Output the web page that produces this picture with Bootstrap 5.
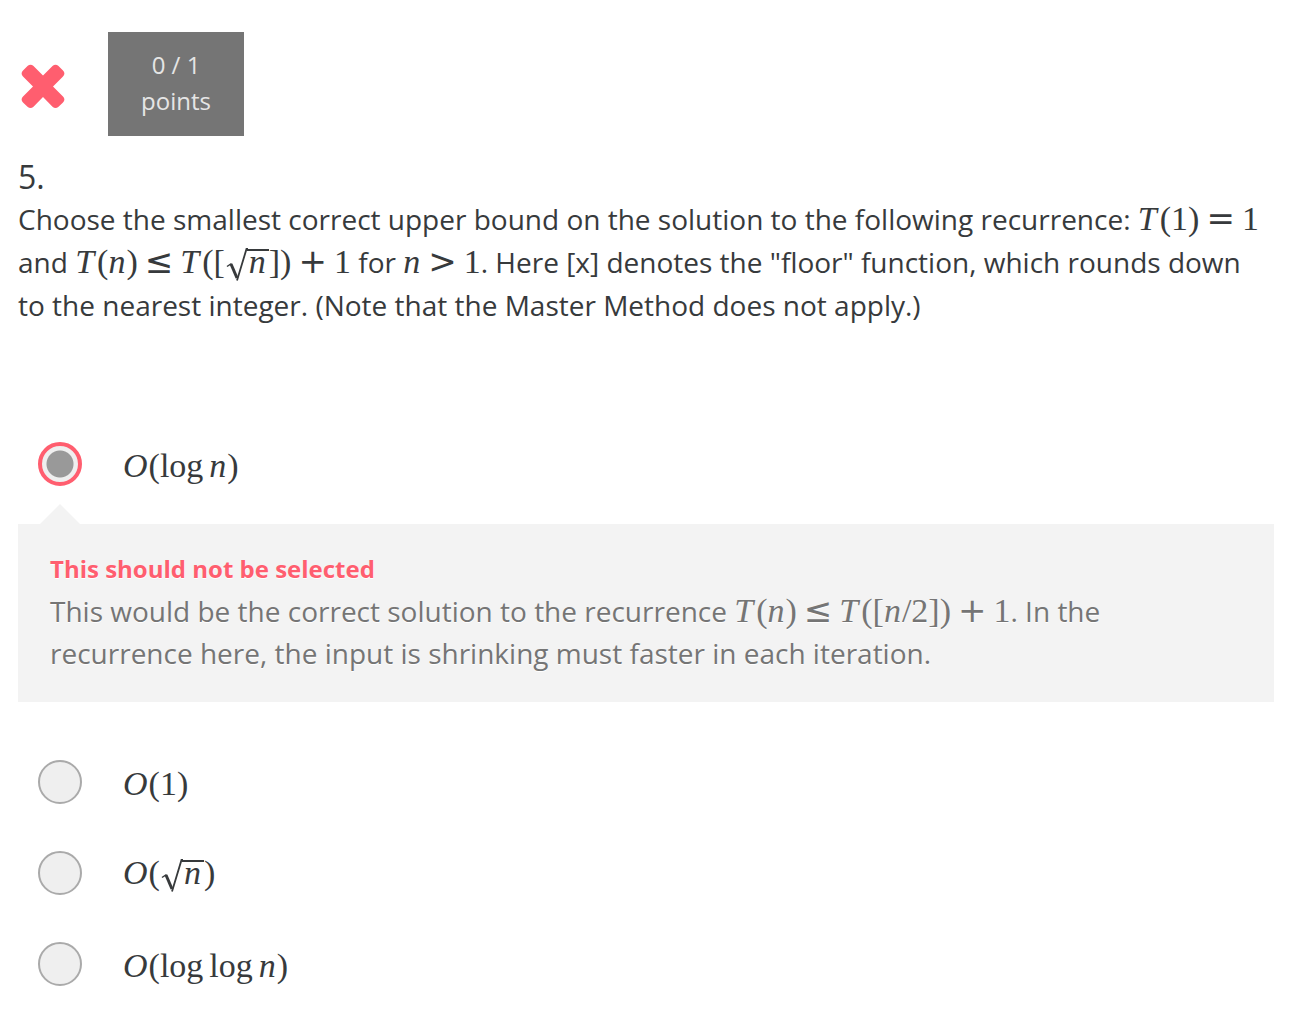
<!DOCTYPE html>
<html lang="en">
<head>
<meta charset="utf-8">
<meta name="viewport" content="width=device-width, initial-scale=1">
<title>Question 5</title>
<link href="https://cdn.jsdelivr.net/npm/bootstrap@5.3.0/dist/css/bootstrap.min.css" rel="stylesheet">
<style>
body { font-family: "Open Sans", "Noto Sans", sans-serif; color: #373a3c; background: #fff; }
.quiz { padding: 32px 32px 26px 18px; }
.wrong-icon { width: 50px; height: 50px; fill: #ff5e6f; }
.score { width: 136px; padding: 15px 0 17px; margin-left: 40px; background: #757575; color: #e5e5e5; font-size: 24px; line-height: 36px; }
.q-number { margin: 19px 0 0; font-size: 32px; line-height: 43px; font-weight: 400; }
.q-text { margin: 0 0 115px; font-size: 28px; line-height: 43px; }
.math { font-family: "Liberation Serif", serif; font-size: 34px; line-height: 1; white-space: nowrap; }
.math i { margin-right: 1px; }
.math .fn { margin-right: 3px; }
.op { font-family: "DejaVu Sans", sans-serif; font-size: 34px; line-height: 1; margin: 0 7px; }
.root-sign { width: 22px; height: 34px; vertical-align: -9px; margin-left: 1px; }
.radicand { display: inline-block; line-height: 22px; border-top: 2px solid; padding: 0 2px; margin-left: -1px; }
.thin { margin-left: 6px; }
.option { min-height: 44px; padding-left: 20px; gap: 41px; }
.option label { padding-top: 3px; }
.option + .option { margin-top: 47px; }
.option .form-check-input { width: 44px; height: 44px; margin: 0; background-color: #efefef; border: 2px solid #aaa; flex: none; }
.option .form-check-input:checked { border: 4px solid #ff5e6f; background: radial-gradient(circle, #999 0 13px, #efefef 14px); }
.arrow-up { width: 40px; height: 20px; margin: 18px 0 0 22px; background: #f3f3f3; clip-path: polygon(50% 0, 100% 100%, 0 100%); }
.feedback { padding: 24px 32px 28px; margin-bottom: 58px; background: #f3f3f3; color: #757575; font-size: 28px; line-height: 42px; text-shadow: 0 1px 0 #fff; }
.feedback-title { margin: 0; color: #ff5e6f; font-size: 24px; line-height: 42px; font-weight: 700; }
</style>
</head>
<body>
<main class="quiz">
  <header class="d-flex align-items-center">
    <svg class="wrong-icon" viewBox="0 -1 50 50" role="img" aria-label="Incorrect"><path d="M9.500 6.100Q12.500 3.600 15.500 6.100L25 15.600L34.500 6.100Q37.500 3.600 40.500 6.100L45 10.600Q47.800 13.600 45 16.600L35 26.500L45 36.500Q47.800 39.500 45 42.500L40.500 46.700Q37.500 49.200 34.500 46.700L25 37.100L15.500 46.700Q12.500 49.200 9.500 46.700L5 42.500Q2.200 39.500 5 36.500L15 26.500L5 16.600Q2.200 13.600 5 10.600Z"/></svg>
    <div class="score text-center">0 / 1<br>points</div>
  </header>
  <h1 class="q-number">5.</h1>
  <p class="q-text">Choose the smallest correct upper bound on the solution to the following recurrence: <span class="math"><i class="fn">T</i>(1)<span class="op">=</span>1</span> and <span class="math"><i class="fn">T</i>(<i>n</i>)<span class="op">≤</span><i class="fn">T</i>([<svg class="root-sign" viewBox="0 0 22 34" fill="none" stroke="currentColor" aria-hidden="true"><path d="M1 18.500L5.500 15.500" stroke-width="1.500"/><path d="M5 16L11 30" stroke-width="3"/><path d="M11 32.500L20.500 1H22" stroke-width="1.800"/></svg><span class="radicand"><i>n</i></span>])<span class="op">+</span>1</span> for <span class="math"><i>n</i><span class="op">&gt;</span>1</span>. Here [x] denotes the "floor" function, which rounds down to the nearest integer. (Note that the Master Method does not apply.)</p>
  <form>
    <div class="option d-flex align-items-center">
      <input class="form-check-input" type="radio" name="bound" id="a1" checked>
      <label class="math" for="a1"><i>O</i>(log<i class="thin">n</i>)</label>
    </div>
    <div class="arrow-up"></div>
    <section class="feedback">
      <h2 class="feedback-title">This should not be selected</h2>
      <p class="mb-0">This would be the correct solution to the recurrence <span class="math"><i class="fn">T</i>(<i>n</i>)<span class="op">≤</span><i class="fn">T</i>([<i>n</i>/2])<span class="op">+</span>1</span>. In the recurrence here, the input is shrinking must faster in each iteration.</p>
    </section>
    <div class="option d-flex align-items-center">
      <input class="form-check-input" type="radio" name="bound" id="a2">
      <label class="math" for="a2"><i>O</i>(1)</label>
    </div>
    <div class="option d-flex align-items-center">
      <input class="form-check-input" type="radio" name="bound" id="a3">
      <label class="math" for="a3"><i>O</i>(<svg class="root-sign" viewBox="0 0 22 34" fill="none" stroke="currentColor" aria-hidden="true"><path d="M1 18.500L5.500 15.500" stroke-width="1.500"/><path d="M5 16L11 30" stroke-width="3"/><path d="M11 32.500L20.500 1H22" stroke-width="1.800"/></svg><span class="radicand"><i>n</i></span>)</label>
    </div>
    <div class="option d-flex align-items-center">
      <input class="form-check-input" type="radio" name="bound" id="a4">
      <label class="math" for="a4"><i>O</i>(log<span class="thin">log</span><i class="thin">n</i>)</label>
    </div>
  </form>
</main>
<script src="https://cdn.jsdelivr.net/npm/bootstrap@5.3.0/dist/js/bootstrap.bundle.min.js"></script>
</body>
</html>
